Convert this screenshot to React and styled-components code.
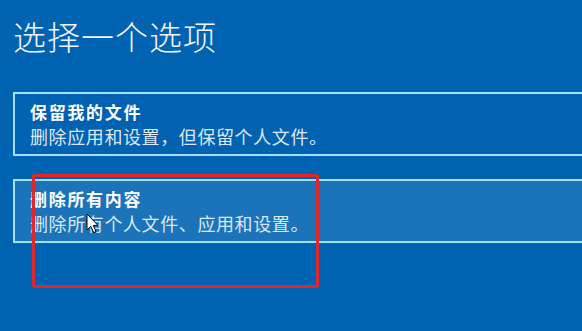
import React from 'react';
import styled, {createGlobalStyle} from 'styled-components';

const GlobalStyle = createGlobalStyle`
  html, body {
    margin: 0;
    padding: 0;
    background: #0063b1;
  }
  body {
    font-family: "Noto Sans CJK SC", "Noto Sans", sans-serif;
  }
`;

const Screen = styled.div`
  position: relative;
  width: 582px;
  height: 331px;
  overflow: hidden;
  background: #0063b1;
  padding-left: 13px;
  box-sizing: border-box;
`;

const Title = styled.h1`
  margin: 0;
  padding-top: 16px;
  font-size: 33px;
  line-height: 40px;
  font-weight: 300;
  color: #f2f6fb;
  letter-spacing: 1px;
`;

const OptionList = styled.div`
  display: flex;
  flex-direction: column;
  gap: 23px;
  margin-top: 36px;
  width: 620px;
`;

const Option = styled.div`
  height: 64px;
  box-sizing: border-box;
  border: 2px solid #a3e0f4;
  background: ${props => (props.selected ? '#1b73b9' : '#0162b1')};
  padding: 7px 15px 0;
`;

const OptionTitle = styled.div`
  font-size: 17px;
  line-height: 22px;
  font-weight: 700;
  color: #ffffff;
  letter-spacing: 1.7px;
`;

const OptionText = styled.div`
  margin-top: 1px;
  font-size: 18px;
  line-height: 24px;
  color: #dbe8f5;
  letter-spacing: 0.6px;
`;

const Highlight = styled.div`
  position: absolute;
  left: 32px;
  top: 174px;
  width: 287px;
  height: 114px;
  box-sizing: border-box;
  border: 3px solid #e3262b;
  border-radius: 3px;
`;

const Cursor = styled.svg`
  position: absolute;
  left: 86px;
  top: 213px;
`;

const options = [
  {title: '保留我的文件', text: '删除应用和设置，但保留个人文件。'},
  {title: '删除所有内容', text: '删除所有个人文件、应用和设置。', selected: true},
];

const App = () => {
  return (
    <>
      <GlobalStyle />
      <Screen>
        <Title>选择一个选项</Title>
        <OptionList>
          {options.map(option => (
            <Option key={option.title} selected={option.selected}>
              <OptionTitle>{option.title}</OptionTitle>
              <OptionText>{option.text}</OptionText>
            </Option>
          ))}
        </OptionList>
        <Highlight />
        <Cursor width="13" height="21" viewBox="0 0 13 21">
          <path
            d="M1 1 L1 17 L4.8 13.3 L7.6 19.6 L10 18.6 L7.3 12.4 L12 12.4 Z"
            fill="#ffffff"
            stroke="#000000"
            strokeWidth="1"
            strokeLinejoin="round"
          />
        </Cursor>
      </Screen>
    </>
  );
};

export default App;
